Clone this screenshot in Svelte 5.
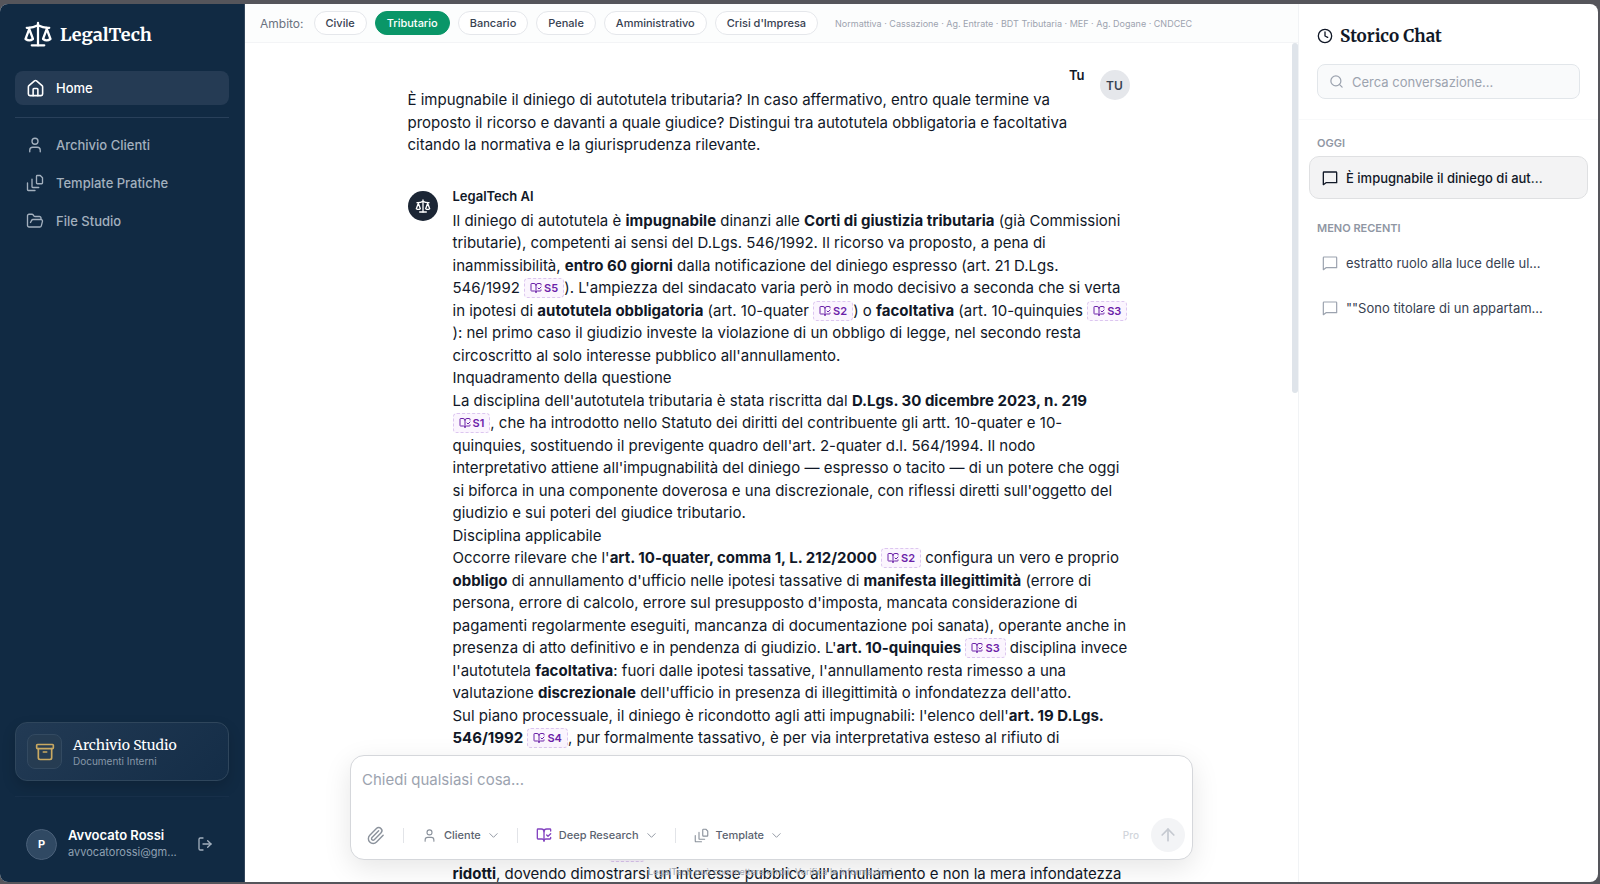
<script>
  let query = $state('');
  let prompt = $state('');
  let scope = $state('Tributario');

  const scopes = ['Civile', 'Tributario', 'Bancario', 'Penale', 'Amministrativo', "Crisi d'Impresa"];
  const nav = [
    { icon: 'user', label: 'Archivio Clienti' },
    { icon: 'stack', label: 'Template Pratiche' },
    { icon: 'folder', label: 'File Studio' }
  ];
  const older = ['estratto ruolo alla luce delle ul...', '""Sono titolare di un appartam...'];
</script>

{#snippet icon(name, size, weight = 2)}
  <svg class="icon" width={size} height={size} viewBox="0 0 24 24" fill="none" stroke="currentColor" stroke-width={weight} stroke-linecap="round" stroke-linejoin="round" aria-hidden="true">
    {#if name === 'scale'}
      <path d="M12 3v18" /><path d="m19 8 3 8a5 5 0 0 1-6 0zV7" /><path d="M3 7h1a17 17 0 0 0 8-2 17 17 0 0 0 8 2h1" /><path d="m5 8 3 8a5 5 0 0 1-6 0zV7" /><path d="M7 21h10" />
    {:else if name === 'home'}
      <path d="M15 21v-8a1 1 0 0 0-1-1h-4a1 1 0 0 0-1 1v8" /><path d="M3 10a2 2 0 0 1 .709-1.528l7-5.999a2 2 0 0 1 2.582 0l7 5.999A2 2 0 0 1 21 10v9a2 2 0 0 1-2 2H5a2 2 0 0 1-2-2z" />
    {:else if name === 'user'}
      <circle cx="12" cy="7" r="4" /><path d="M19 21v-2a4 4 0 0 0-4-4H9a4 4 0 0 0-4 4v2" />
    {:else if name === 'stack'}
      <path d="M15 2h4l3 3v7a1 1 0 0 1-1 1h-6a1 1 0 0 1-1-1V3a1 1 0 0 1 1-1z" /><path d="M8 7v10a1 1 0 0 0 1 1h8" /><path d="M2 12v9a1 1 0 0 0 1 1h9" />
    {:else if name === 'folder'}
      <path d="m6 14 1.500-2.900A2 2 0 0 1 9.240 10H20a2 2 0 0 1 1.940 2.500l-1.540 6a2 2 0 0 1-1.950 1.500H4a2 2 0 0 1-2-2V5a2 2 0 0 1 2-2h3.900a2 2 0 0 1 1.690.9l.81 1.200a2 2 0 0 0 1.670.9H18a2 2 0 0 1 2 2v2" />
    {:else if name === 'archive'}
      <rect x="2" y="3" width="20" height="5" rx="1" /><path d="M4 8v11a2 2 0 0 0 2 2h12a2 2 0 0 0 2-2V8" /><path d="M10 12h4" />
    {:else if name === 'logout'}
      <path d="m16 17 5-5-5-5" /><path d="M21 12H9" /><path d="M9 21H5a2 2 0 0 1-2-2V5a2 2 0 0 1 2-2h4" />
    {:else if name === 'book'}
      <path d="M12 21V7" /><path d="m16 12 2 2 4-4" /><path d="M22 6V4a1 1 0 0 0-1-1h-5a4 4 0 0 0-4 4 4 4 0 0 0-4-4H3a1 1 0 0 0-1 1v13a1 1 0 0 0 1 1h6a3 3 0 0 1 3 3 3 3 0 0 1 3-3h6a1 1 0 0 0 1-1v-1.300" />
    {:else if name === 'clip'}
      <path d="m16 6-8.414 8.586a2 2 0 0 0 2.829 2.829l8.414-8.586a4 4 0 1 0-5.657-5.657l-8.379 8.551a6 6 0 1 0 8.485 8.485l8.379-8.551" />
    {:else if name === 'down'}
      <path d="m4 8 8 8 8-8" />
    {:else if name === 'up'}
      <path d="m5 12 7-7 7 7" /><path d="M12 19V5" />
    {:else if name === 'clock'}
      <circle cx="12" cy="12" r="10" /><path d="M12 6v6l4 2" />
    {:else if name === 'search'}
      <path d="m21 21-4.340-4.340" /><circle cx="11" cy="11" r="8" />
    {:else if name === 'chat'}
      <path d="M22 19H6l-4 3V4a1 1 0 0 1 1-1h18a1 1 0 0 1 1 1z" />
    {/if}
  </svg>
{/snippet}

{#snippet cite(id)}<button class="cite" type="button">{@render icon('book', 12)}{id}</button>{/snippet}

<div class="frame">
  <div class="app">
    <aside class="side">
      <div class="brand">{@render icon('scale', 30, 1.8)}<span>LegalTech</span></div>
      <nav>
        <a class="item active" href="#home">{@render icon('home', 19)}Home</a>
        <hr />
        {#each nav as n}
          <a class="item" href="#{n.icon}">{@render icon(n.icon, 18, 1.8)}{n.label}</a>
        {/each}
      </nav>
      <button class="archive" type="button">
        <span class="tile">{@render icon('archive', 20)}</span>
        <span class="stacked"><span class="title">Archivio Studio</span><span class="sub">Documenti Interni</span></span>
      </button>
      <div class="account">
        <span class="avatar">P</span>
        <div class="who"><strong>Avvocato Rossi</strong><span>avvocatorossi@gm...</span></div>
        <button class="plain" type="button" aria-label="Esci">{@render icon('logout', 16)}</button>
      </div>
    </aside>

    <main>
      <header class="scopes">
        <span class="label">Ambito:</span>
        {#each scopes as s}
          <button type="button" class="pill" class:on={s === scope} onclick={() => (scope = s)}>{s}</button>
        {/each}
        <span class="sources">Normattiva · Cassazione · Ag. Entrate · BDT Tributaria · MEF · Ag. Dogane · CNDCEC</span>
      </header>

      <div class="viewport">
        <div class="thread">
          <article class="msg mine">
            <div class="body">
              <div class="name">Tu</div>
              <p>È impugnabile il diniego di autotutela tributaria? In caso affermativo, entro quale termine va proposto il ricorso e davanti a quale giudice? Distingui tra autotutela obbligatoria e facoltativa citando la normativa e la giurisprudenza rilevante.</p>
            </div>
            <span class="bubble">TU</span>
          </article>
          <article class="msg">
            <span class="bubble dark">{@render icon('scale', 16)}</span>
            <div class="body">
              <div class="name">LegalTech AI</div>
              <p>Il diniego di autotutela è <b>impugnabile</b> dinanzi alle <b>Corti di giustizia tributaria</b> (già Commissioni tributarie), competenti ai sensi del D.Lgs. 546/1992. Il ricorso va proposto, a pena di inammissibilità, <b>entro 60 giorni</b> dalla notificazione del diniego espresso (art. 21 D.Lgs. 546/1992 {@render cite('S5')}). L'ampiezza del sindacato varia però in modo decisivo a seconda che si verta in ipotesi di <b>autotutela obbligatoria</b> (art. 10-quater {@render cite('S2')}) o <b>facoltativa</b> (art. 10-quinquies {@render cite('S3')}): nel primo caso il giudizio investe la violazione di un obbligo di legge, nel secondo resta circoscritto al solo interesse pubblico all'annullamento.</p>
              <p>Inquadramento della questione</p>
              <p>La disciplina dell'autotutela tributaria è stata riscritta dal <b>D.Lgs. 30 dicembre 2023, n. 219</b><br />{@render cite('S1')}, che ha introdotto nello Statuto dei diritti del contribuente gli artt. 10-quater e 10-quinquies, sostituendo il previgente quadro dell'art. 2-quater d.l. 564/1994. Il nodo interpretativo attiene all'impugnabilità del diniego — espresso o tacito — di un potere che oggi si biforca in una componente doverosa e una discrezionale, con riflessi diretti sull'oggetto del giudizio e sui poteri del giudice tributario.</p>
              <p>Disciplina applicabile</p>
              <p>Occorre rilevare che l'<b>art. 10-quater, comma 1, L. 212/2000</b> {@render cite('S2')} configura un vero e proprio <b>obbligo</b> di annullamento d'ufficio nelle ipotesi tassative di <b>manifesta illegittimità</b> (errore di persona, errore di calcolo, errore sul presupposto d'imposta, mancata considerazione di pagamenti regolarmente eseguiti, mancanza di documentazione poi sanata), operante anche in presenza di atto definitivo e in pendenza di giudizio. L'<b>art. 10-quinquies</b> {@render cite('S3')} disciplina invece l'autotutela <b>facoltativa</b>: fuori dalle ipotesi tassative, l'annullamento resta rimesso a una valutazione <b>discrezionale</b> dell'ufficio in presenza di illegittimità o infondatezza dell'atto.</p>
              <p>Sul piano processuale, il diniego è ricondotto agli atti impugnabili: l'elenco dell'<b>art. 19 D.Lgs. 546/1992</b> {@render cite('S4')}, pur formalmente tassativo, è per via interpretativa esteso al rifiuto di</p>
              <div class="rest"><span class="cite"></span></div>
              <p><b>ridotti</b>, dovendo dimostrarsi un interesse pubblico all'annullamento e non la mera infondatezza</p>
            </div>
          </article>
        </div>
        <span class="thumb"></span>
      </div>

      <div class="dock">
        <form class="composer">
          <textarea rows="2" aria-label="Messaggio" placeholder="Chiedi qualsiasi cosa..." bind:value={prompt}></textarea>
          <div class="tools">
            <button class="clip" type="button" aria-label="Allega">{@render icon('clip', 19, 1.8)}</button>
            <i></i>
            <button type="button">{@render icon('user', 15, 1.8)}<span>Cliente</span>{@render icon('down', 11)}</button>
            <i></i>
            <button class="deep" type="button">{@render icon('book', 16)}<span>Deep Research</span>{@render icon('down', 11)}</button>
            <i></i>
            <button type="button">{@render icon('stack', 15, 1.8)}<span>Template</span>{@render icon('down', 11)}</button>
            <div class="end">
              <span class="pro">Pro</span>
              <button class="send" type="button" aria-label="Invia">{@render icon('up', 20)}</button>
            </div>
          </div>
        </form>
        <p class="note">LegalTech può commettere errori. Verifica le informazioni.</p>
      </div>
    </main>

    <aside class="history">
      <div class="top">
        <h2>{@render icon('clock', 16)}Storico Chat</h2>
        <label class="search">{@render icon('search', 15)}<input type="text" aria-label="Cerca" placeholder="Cerca conversazione..." bind:value={query} /></label>
      </div>
      <div class="lists">
        <h3>Oggi</h3>
        <a class="chat current" href="#chat">{@render icon('chat', 16)}<span>È impugnabile il diniego di aut...</span></a>
        <h3>Meno recenti</h3>
        {#each older as o}
          <a class="chat" href="#chat">{@render icon('chat', 16, 1.8)}<span>{o}</span></a>
        {/each}
      </div>
    </aside>
  </div>
</div>

<style>
  :global(body) { margin: 0; background: #55555b; }
  * { box-sizing: border-box; }
  button { font: inherit; color: inherit; background: none; border: 0; padding: 0; cursor: pointer; }
  a { color: inherit; text-decoration: none; }
  .icon { flex: none; display: block; }

  .frame { height: 100vh; padding: 4px 2px 2px 0; font-family: Inter, sans-serif; color: #111827; }
  .app { display: grid; grid-template-columns: 245px minmax(0, 1fr) 300px; height: 100%; background: #fff; border-radius: 8px; overflow: hidden; }

  .side { display: flex; flex-direction: column; padding: 15px 15px 21px 15px; background: #112a43; border-right: 1px solid #33465b; color: #a3b0be; }
  .brand, h2, .title { font-family: Merriweather, "DejaVu Serif Condensed", serif; }
  .brand { display: flex; align-items: center; gap: 7px; padding-left: 8px; height: 30px; color: #fff; font-size: 18px; font-weight: 700; }
  nav { display: flex; flex-direction: column; gap: 4px; margin-top: 22px; }
  .item { display: flex; align-items: center; gap: 12px; height: 34px; padding: 0 11px; border-radius: 8px; font-size: 13px; font-weight: 500; }
  .item.active { gap: 11px; background: #253b54; color: #fff; }
  nav hr { width: 100%; height: 1px; margin: 8px 0 6px; border: 0; background: #29405a; }

  .archive { display: flex; align-items: center; gap: 11px; margin-top: auto; height: 59px; padding: 0 11px; border: 1px solid #2f465c; border-radius: 12px; background: linear-gradient(135deg, #223a54, #142d47); box-shadow: 0 6px 14px rgba(0, 0, 0, 0.16); text-align: left; }
  .tile { display: grid; place-items: center; width: 35px; height: 35px; border: 1px solid #334a61; border-radius: 8px; background: #263c52; color: #c9a962; }
  .stacked { display: flex; flex-direction: column; }
  .title { color: #fff; font-size: 14px; line-height: 18px; }
  .sub { color: #8797a8; font-size: 10px; line-height: 14px; }
  .account { display: flex; align-items: center; gap: 11px; margin-top: 15px; padding: 30px 16px 0 11px; border-top: 1px solid #172f49; }
  .avatar { display: grid; place-items: center; flex: none; width: 31px; height: 31px; border: 1px solid #4a6079; border-radius: 50%; background: #304963; color: #fff; font-size: 11px; font-weight: 700; }
  .who { display: flex; flex-direction: column; flex: 1; min-width: 0; font-size: 11px; line-height: 17px; color: #8fa0b2; }
  .who strong { color: #fff; font-size: 13px; font-weight: 600; }

  main { position: relative; display: flex; flex-direction: column; min-width: 0; min-height: 0; }
  .scopes { display: flex; align-items: center; gap: 8px; flex: none; height: 39px; padding: 0 15px; border-bottom: 1px solid #f3f4f6; background: #fcfdfd; font-size: 11px; white-space: nowrap; }
  .label { margin-right: 2px; color: #6b7280; font-size: 12px; }
  .pill { height: 24px; padding: 0 11px; border: 1px solid #e5e7eb; border-radius: 12px; background: #fff; color: #374151; font-weight: 500; }
  .pill.on { border-color: #0a9668; background: #0a9668; color: #fff; }
  .sources { margin-left: 9px; color: #9ca3af; font-size: 9px; }

  .viewport { position: relative; flex: 1; min-height: 0; padding-right: 6px; overflow: hidden; }
  .thumb { position: absolute; top: 0; right: 0; width: 6px; height: 350px; border-radius: 3px; background: #dfe4ea; }
  .thread { display: flex; flex-direction: column; gap: 30px; max-width: 722px; margin: 0 auto; padding-top: 23px; }
  .msg { display: flex; gap: 15px; }
  .msg.mine .name { text-align: right; }
  .body { flex: 1; min-width: 0; }
  .name { font-size: 13px; line-height: 19px; font-weight: 600; margin-bottom: 4px; }
  p { margin: 0; font-size: 15px; line-height: 1.5; }
  b { font-weight: 700; }
  .rest { display: flex; align-items: center; height: 22px; margin-top: 91px; padding-left: 156px; }
  .rest .cite { width: 36px; }
  .bubble { display: grid; place-items: center; flex: none; width: 30px; height: 30px; margin-top: 4px; border-radius: 50%; background: #e5e7eb; color: #374151; font-size: 12px; font-weight: 600; }
  .bubble.dark { background: #1c2635; color: #fff; }
  .cite { display: inline-flex; align-items: center; gap: 2px; height: 20px; padding: 0 5px; border: 1px dashed #dcc6f0; border-radius: 4px; background: #fbf5fe; color: #6b21a8; font-size: 11px; font-weight: 600; line-height: 18px; vertical-align: -1px; margin: -2px 0; }

  .dock { position: absolute; left: 0; right: 0; bottom: 0; padding: 0 104px; }
  .composer { max-width: 843px; height: 105px; margin: 0 auto; padding: 11px 7px 7px 11px; display: flex; flex-direction: column; border: 1px solid #d5d7db; border-radius: 14px; background: #fff; box-shadow: 0 8px 28px rgba(0, 0, 0, 0.1); }
  textarea { flex: 1; width: 100%; padding: 2px 0; border: 0; outline: 0; resize: none; background: none; font: 15px/22px Inter, sans-serif; color: #111827; }
  textarea::placeholder, input::placeholder { color: #9ca3af; opacity: 1; }
  .tools { display: flex; align-items: center; gap: 18px; height: 34px; color: #8b929c; font-size: 11px; }
  .tools button { display: flex; align-items: center; gap: 7px; font-weight: 500; }
  .tools button span { color: #5b6370; }
  .tools .clip { margin-left: 4px; }
  .tools .deep > :global(.icon:first-child) { color: #8343c0; }
  .tools i { width: 1px; height: 15px; background: #e2e4e8; }
  .end { display: flex; align-items: center; gap: 12px; margin-left: auto; }
  .tools .send { display: grid; place-items: center; width: 34px; height: 34px; border-radius: 50%; background: #f3f4f6; color: #c5c9d0; }
  .pro { color: #d1d5db; font-size: 10px; font-weight: 500; }
  .note { height: 22px; padding-top: 5px; color: #9ca3af; font-size: 9px; line-height: 14px; text-align: center; }

  .history { border-left: 1px solid #f1f3f5; }
  .top { padding: 19px 18px 20px; border-bottom: 1px solid #f8f9fa; }
  h2 { display: flex; align-items: center; gap: 7px; height: 26px; margin: 0; font-size: 17px; font-weight: 700; }
  .search { display: flex; align-items: center; gap: 8px; height: 35px; margin-top: 15px; padding: 0 11px; border: 1px solid #e2e6ea; border-radius: 8px; background: #f9fafb; color: #9ca3af; }
  input { flex: 1; min-width: 0; padding: 0; border: 0; outline: 0; background: none; font: 13px/20px Inter, sans-serif; }
  .lists { padding: 15px 10px; }
  h3 { height: 16px; margin: 0 0 5px 8px; color: #8f96a3; font-size: 11px; line-height: 16px; font-weight: 600; text-transform: uppercase; }
  .chat { display: flex; align-items: center; gap: 8px; height: 43px; margin-bottom: 2px; padding: 0 12px; border: 1px solid transparent; border-radius: 10px; color: #9ca3af; font-size: 13px; }
  .chat span { color: #374151; white-space: nowrap; }
  .chat.current { margin-bottom: 21px; border-color: #dfe0e2; background: #f3f3f4; color: #111827; }
  .chat.current span { color: #111827; font-weight: 500; }
</style>
